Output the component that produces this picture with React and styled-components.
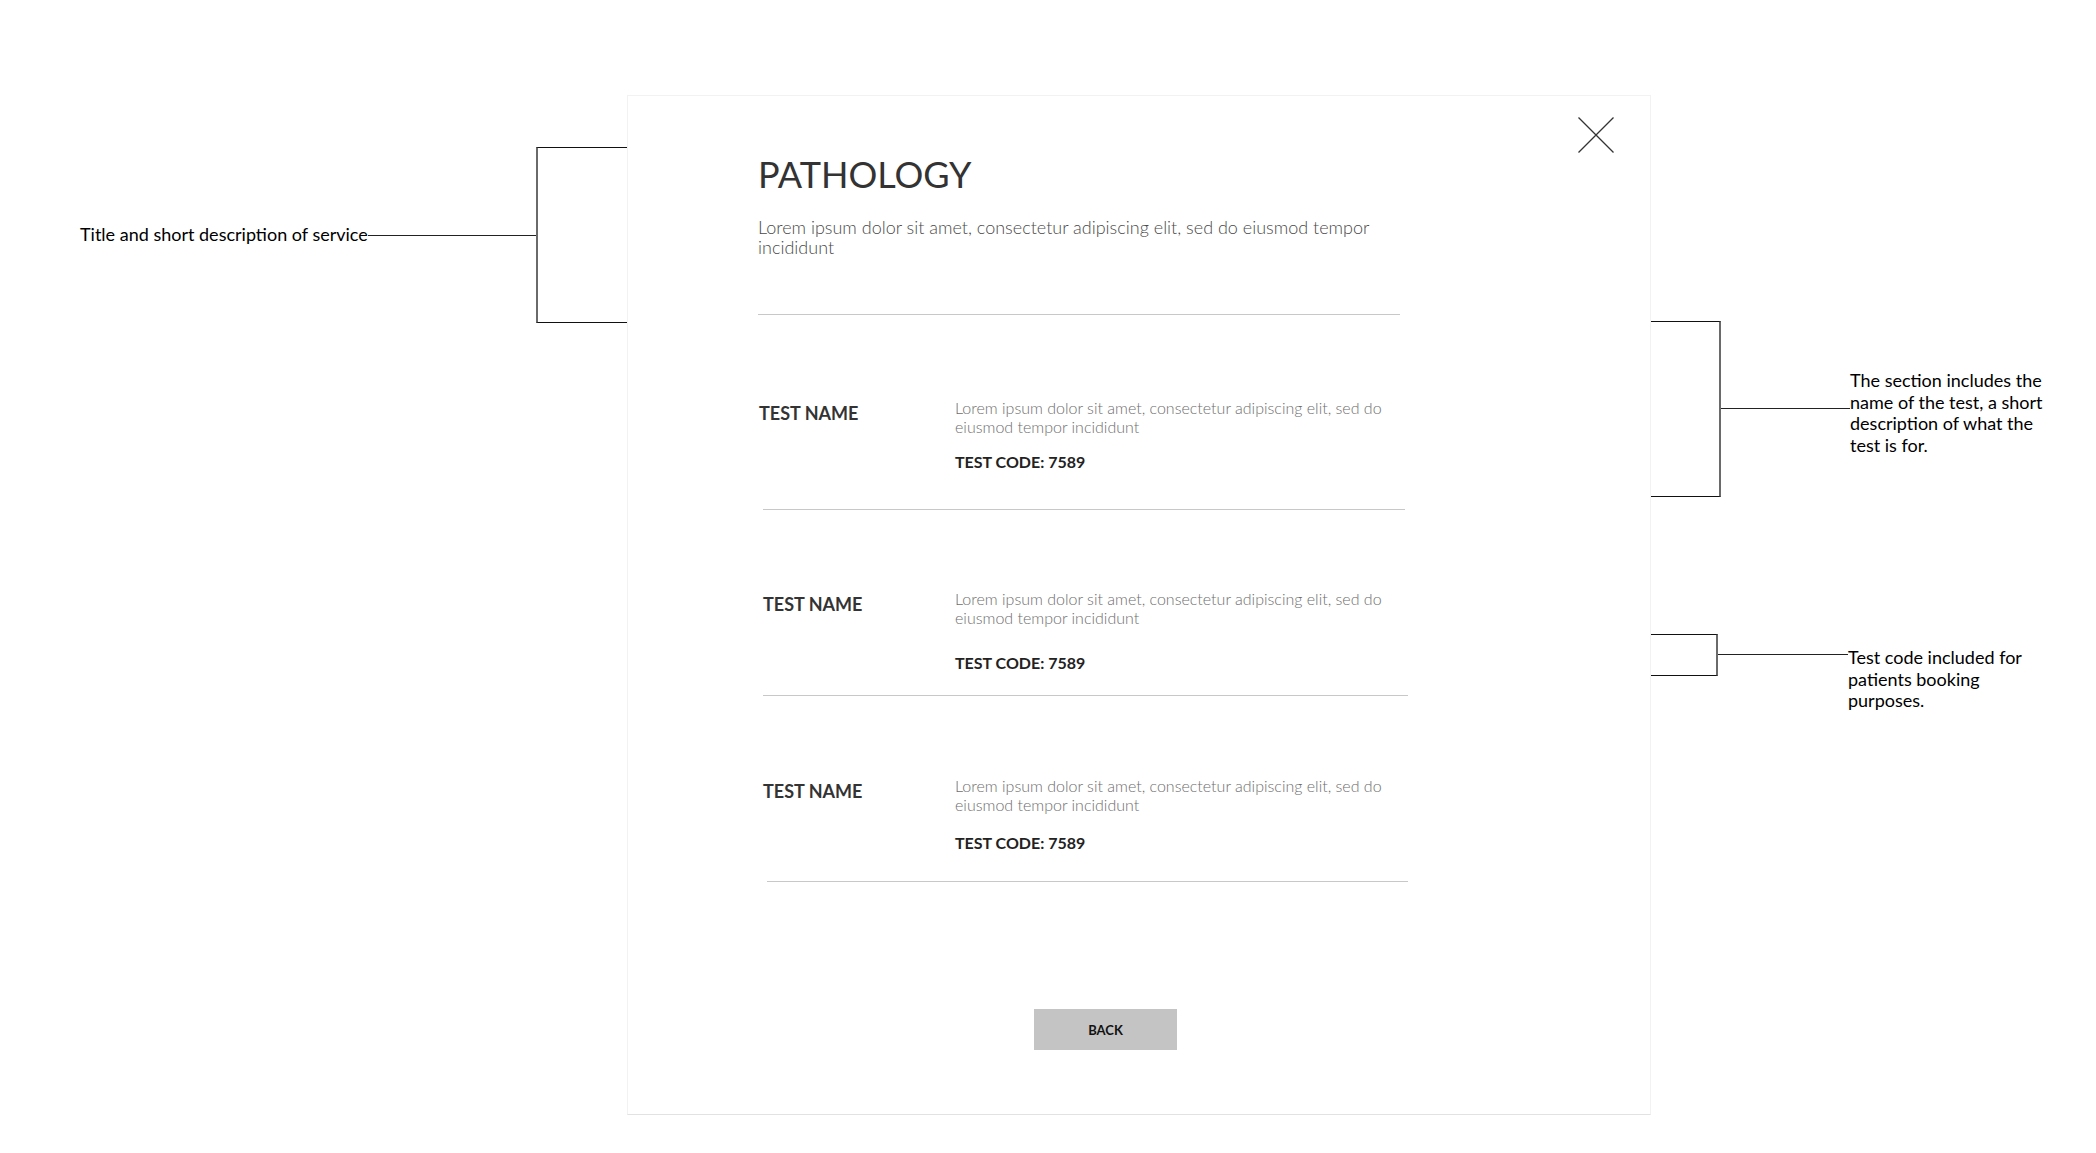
import React from 'react';
import styled, { createGlobalStyle } from 'styled-components';

const GlobalStyle = createGlobalStyle`
  body {
    margin: 0;
    background: #fff;
    font-family: 'Lato', 'Open Sans', sans-serif;
  }
`;

const Page = styled.div`
  display: flex;
  width: 2096px;
  min-height: 1153px;
  padding-top: 95px;
  box-sizing: border-box;
`;

const LeftSide = styled.div`
  width: 627px;
  flex-shrink: 0;
`;

const RightSide = styled.div`
  flex: 1;
  display: flex;
  flex-direction: column;
`;

const LeftCallout = styled.div`
  display: flex;
  align-items: center;
  margin-top: ${(p) => p.top}px;
  padding-left: 80px;
`;

const RightCallout = styled.div`
  display: flex;
  align-items: flex-start;
  margin-top: ${(p) => p.top}px;
`;

const CalloutLabel = styled.div`
  font-size: 18px;
  line-height: 21.7px;
  color: #000;
  white-space: nowrap;
`;

const CalloutNote = styled.div`
  margin-top: ${(p) => p.top}px;
  width: ${(p) => p.width}px;
  font-size: 18px;
  line-height: 21.7px;
  color: #000;
`;

const Connector = styled.div`
  flex: ${(p) => (p.width ? `0 0 ${p.width}px` : '1')};
  margin-top: ${(p) => p.top || 0}px;
  height: 1px;
  background: #222;
`;

const Bracket = styled.div`
  width: ${(p) => p.width}px;
  height: ${(p) => p.height}px;
  flex-shrink: 0;
  box-sizing: border-box;
  border-top: 1px solid #111;
  border-bottom: 1px solid #111;
  border-${(p) => p.side}: 2px solid #6a6a6a;
`;

const Card = styled.div`
  width: 1024px;
  height: 1020px;
  flex-shrink: 0;
  box-sizing: border-box;
  border: 1px solid #f2f2f2;
  border-bottom-color: #e2e2e2;
  background: #fff;
  padding: 21px 36px 0 130px;
  display: flex;
  flex-direction: column;
`;

const CloseRow = styled.div`
  display: flex;
  justify-content: flex-end;
`;

const CloseButton = styled.button`
  width: 36px;
  height: 36px;
  padding: 0;
  border: none;
  background: none;
  display: flex;
`;

const Title = styled.h1`
  margin: 0;
  font-size: 36px;
  line-height: 42px;
  font-weight: 400;
  color: #333;
`;

const Lead = styled.p`
  margin: 22px 0 0;
  width: 642px;
  font-size: 18px;
  line-height: 20px;
  font-weight: 300;
  color: #4a4a4a;
`;

const Divider = styled.div`
  height: 1px;
  background: #c8c8c8;
  margin-top: ${(p) => p.top || 0}px;
  margin-left: ${(p) => p.shift || 0}px;
  width: ${(p) => p.width || 642}px;
`;

const TestRow = styled.div`
  display: grid;
  grid-template-columns: 197px 445px;
  padding-top: ${(p) => p.top}px;
  padding-bottom: ${(p) => p.bottom}px;
`;

const TestName = styled.div`
  margin-top: 4.5px;
  margin-left: ${(p) => p.shift}px;
  font-size: 18px;
  line-height: 22px;
  font-weight: 700;
  color: #333;
`;

const TestDesc = styled.div`
  font-size: 16px;
  line-height: 19px;
  font-weight: 300;
  color: #6e6e6e;
`;

const TestCode = styled.div`
  margin-top: ${(p) => p.gap}px;
  font-size: 16px;
  line-height: 19px;
  font-weight: 700;
  color: #222;
`;

const BackButton = styled.button`
  margin: 127px 0 0 276px;
  width: 143px;
  height: 41px;
  border: none;
  background: #c4c4c4;
  font-family: inherit;
  font-size: 13px;
  font-weight: 700;
  color: #111;
  padding: 0;
`;

const lorem =
  'Lorem ipsum dolor sit amet, consectetur adipiscing elit, sed do eiusmod tempor incididunt';

const tests = [
  { top: 82.5, gap: 16, bottom: 38.5, nameShift: 1, lineShift: 5, lineWidth: 642 },
  { top: 78.5, gap: 26, bottom: 23.5, nameShift: 5, lineShift: 5, lineWidth: 645 },
  { top: 79.5, gap: 19, bottom: 29.5, nameShift: 5, lineShift: 9, lineWidth: 641 },
];

function CloseIcon() {
  return (
    <svg width="36" height="36" viewBox="0 0 36 36">
      <path d="M0.5 0.5 L35.5 35.5 M35.5 0.5 L0.5 35.5" stroke="#333" strokeWidth="1.3" fill="none" />
    </svg>
  );
}

export default function App() {
  return (
    <>
      <GlobalStyle />
      <Page>
        <LeftSide>
          <LeftCallout top={52}>
            <CalloutLabel>Title and short description of service</CalloutLabel>
            <Connector />
            <Bracket side="left" width={91} height={176} />
          </LeftCallout>
        </LeftSide>

        <Card>
          <CloseRow>
            <CloseButton aria-label="Close">
              <CloseIcon />
            </CloseButton>
          </CloseRow>
          <Title>PATHOLOGY</Title>
          <Lead>{lorem}</Lead>
          <Divider top={57} />
          {tests.map((t, i) => (
            <React.Fragment key={i}>
              <TestRow top={t.top} bottom={t.bottom}>
                <TestName shift={t.nameShift}>TEST NAME</TestName>
                <div>
                  <TestDesc>{lorem}</TestDesc>
                  <TestCode gap={t.gap}>TEST CODE: 7589</TestCode>
                </div>
              </TestRow>
              <Divider shift={t.lineShift} width={t.lineWidth} />
            </React.Fragment>
          ))}
          <div>
            <BackButton>BACK</BackButton>
          </div>
        </Card>

        <RightSide>
          <RightCallout top={226}>
            <Bracket side="right" width={70} height={176} />
            <Connector width={129} top={87} />
            <CalloutNote top={49} width={205}>
              The section includes the name of the test, a short description of what the test is for.
            </CalloutNote>
          </RightCallout>
          <RightCallout top={137}>
            <Bracket side="right" width={67} height={42} />
            <Connector width={130} top={20} />
            <CalloutNote top={13} width={195}>
              Test code included for patients booking purposes.
            </CalloutNote>
          </RightCallout>
        </RightSide>
      </Page>
    </>
  );
}
